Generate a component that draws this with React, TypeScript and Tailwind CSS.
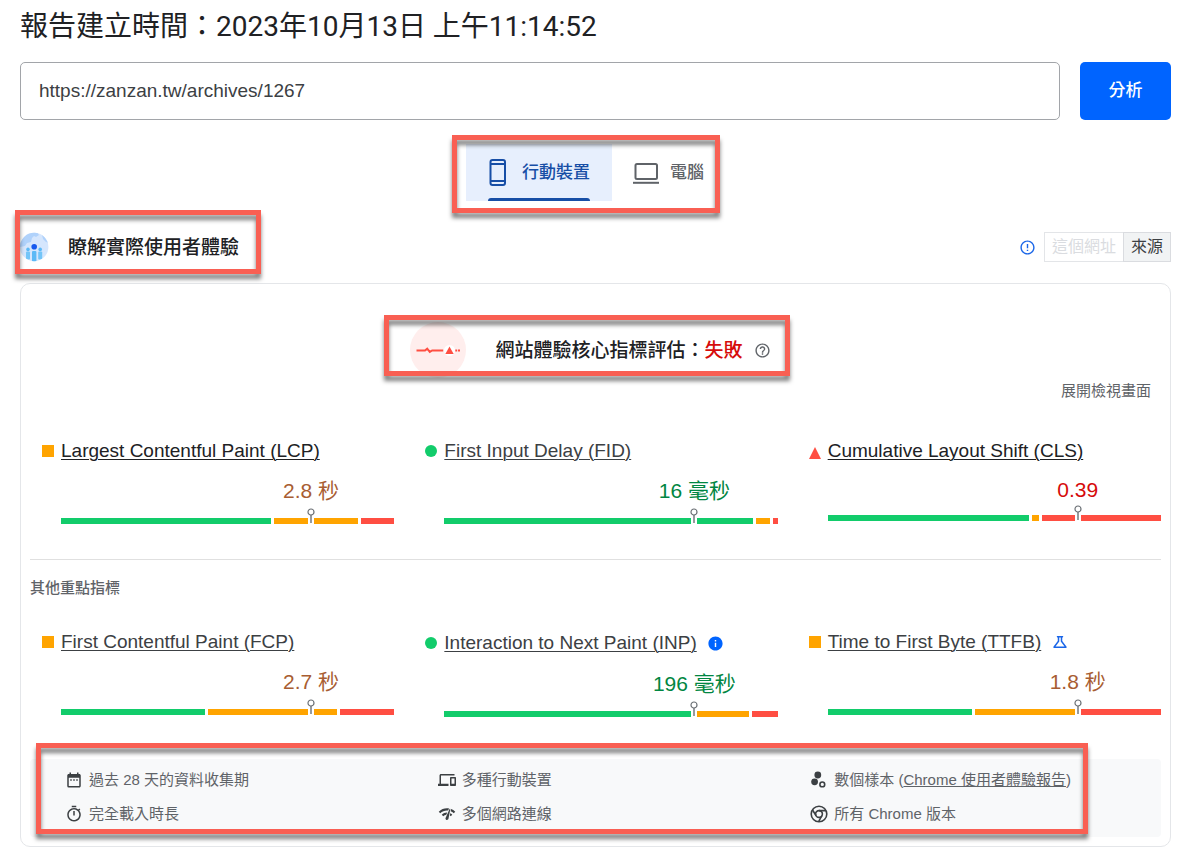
import { useState } from 'react';
import type { ReactNode } from 'react';
import clsx from 'clsx';
import {
  MdDateRange,
  MdErrorOutline,
  MdHelpOutline,
  MdInfo,
  MdNetworkCheck,
  MdOutlineDevices,
  MdOutlineScience,
  MdOutlineTimer,
} from 'react-icons/md';

type Rating = 'good' | 'average' | 'poor';

interface Metric {
  name: string;
  value: string;
  rating: Rating;
  shares: [number, number, number];
  strong?: boolean;
  badge?: 'info' | 'experimental';
}

const CORE_METRICS: Metric[] = [
  { name: 'Largest Contentful Paint (LCP)', value: '2.8 秒', rating: 'average', shares: [210, 85, 33], strong: true },
  { name: 'First Input Delay (FID)', value: '16 毫秒', rating: 'good', shares: [309, 14, 5] },
  { name: 'Cumulative Layout Shift (CLS)', value: '0.39', rating: 'poor', shares: [202, 7, 119], strong: true },
];

const OTHER_METRICS: Metric[] = [
  { name: 'First Contentful Paint (FCP)', value: '2.7 秒', rating: 'average', shares: [144, 130, 54] },
  { name: 'Interaction to Next Paint (INP)', value: '196 毫秒', rating: 'good', shares: [248, 54, 26], badge: 'info' },
  { name: 'Time to First Byte (TTFB)', value: '1.8 秒', rating: 'average', shares: [145, 101, 82], badge: 'experimental' },
];

const VALUE_COLORS: Record<Rating, string> = {
  good: 'text-[#018642]',
  average: 'text-[#a85d32]',
  poor: 'text-[#d60b0b]',
};

const BAR_COLORS = ['bg-[#12cc6b]', 'bg-[#ffa400]', 'bg-[#ff4e42]'];

function Highlight({ className }: { className: string }) {
  return (
    <div
      aria-hidden
      className={clsx(
        'pointer-events-none absolute z-10 border-5 border-[#f95f53] drop-shadow-[0_5px_2px_rgba(0,0,0,0.5)]',
        className,
      )}
    />
  );
}

function PhoneIcon() {
  return (
    <svg viewBox="0 0 18 27" className="h-[27px] w-[18px]" fill="none" stroke="currentColor" strokeWidth="2" aria-hidden>
      <rect x="2.5" y="1" width="14.5" height="25" rx="2" />
      <path d="M2.5 5h14.5M2.5 22h14.5" />
    </svg>
  );
}

function LaptopIcon() {
  return (
    <svg viewBox="0 0 26 22" className="h-[22px] w-[26px]" fill="none" stroke="currentColor" strokeWidth="2" aria-hidden>
      <rect x="2.5" y="2" width="21.5" height="15" rx="1.5" />
      <path d="M0 20.8h26" />
    </svg>
  );
}

function UsersGlobe() {
  return (
    <svg viewBox="0 0 30 30" className="size-[30px]" aria-hidden>
      <defs>
        <clipPath id="globe">
          <circle cx="14.2" cy="15" r="14.2" />
        </clipPath>
      </defs>
      <g clipPath="url(#globe)">
        <rect width="30" height="30" fill="#d5e6fd" />
        <path d="M0 0h17l2 3-3 2-2-1-2 2-1 4-4 1-2 3-5 1zM22 3l4 2 3 6-3-1-3-3z" fill="#b0d2fb" />
        <rect x="6" y="19.5" width="4" height="8" rx="1" fill="#73c5f8" />
        <rect x="12" y="19" width="4.4" height="11" rx="1" fill="#5cb9f6" />
        <rect x="18.2" y="19.5" width="4" height="8" rx="1" fill="#73c5f8" />
        <circle cx="8" cy="17.4" r="1.8" fill="#5cb9f6" />
        <circle cx="20.2" cy="17.4" r="1.8" fill="#5cb9f6" />
        <circle cx="14.2" cy="14.8" r="2.8" fill="#1659ee" />
      </g>
    </svg>
  );
}

function PulseIcon() {
  return (
    <svg viewBox="0 0 56 56" className="size-14" aria-hidden>
      <circle cx="28" cy="28" r="28" fill="#ffeeed" />
      <path d="M6.5 28.5h8.5l2.2-1.8 2.6 3.2 2.4-1.4h11" fill="none" stroke="#ff4e42" strokeWidth="2" />
      <circle cx="39.5" cy="28.5" r="5.5" fill="#fff" />
      <path d="M39.5 24.4l4.2 7.6h-8.4z" fill="#ff4e42" />
      <path d="M45.3 28.5h1.9M48 28.5h2" stroke="#ff4e42" strokeWidth="2" />
    </svg>
  );
}

function SamplesIcon() {
  return (
    <svg viewBox="0 0 18 18" className="size-[18px]" aria-hidden>
      <circle cx="7.8" cy="4" r="3.4" fill="currentColor" />
      <circle cx="4.6" cy="10.8" r="3.4" fill="currentColor" />
      <circle cx="12.3" cy="13.4" r="2.4" fill="none" stroke="currentColor" strokeWidth="1.6" />
    </svg>
  );
}

function ChromeIcon() {
  return (
    <svg viewBox="0 0 18 18" className="size-[18px]" fill="none" stroke="currentColor" strokeWidth="1.6" aria-hidden>
      <circle cx="9" cy="9" r="7.8" />
      <circle cx="9" cy="9" r="3.4" />
      <path d="M9 5.6h7M6.1 10.7L2.4 4.8M11.9 10.7L8.6 16.7" />
    </svg>
  );
}

function RatingMark({ rating }: { rating: Rating }) {
  if (rating === 'good') return <span className="size-3 rounded-full bg-[#12cc6b]" />;
  if (rating === 'average') return <span className="size-3 bg-[#ffa400]" />;
  return (
    <svg viewBox="0 0 12 12" className="mt-1 size-3" aria-hidden>
      <path d="M6 0l6 12H0z" fill="#ff4e42" />
    </svg>
  );
}

function Distribution({ shares }: { shares: Metric['shares'] }) {
  return (
    <div className="relative mt-3 flex h-1.5 gap-[3px]">
      {shares.map((share, i) => (
        <span key={i} className={BAR_COLORS[i]} style={{ flexGrow: share }} />
      ))}
      {/* 75th percentile pin */}
      <span className="absolute inset-y-0 left-3/4 w-1.5 -translate-x-1/2 bg-white" />
      <svg
        viewBox="0 0 8 15"
        className="absolute -top-2.5 left-3/4 h-[15px] w-2 -translate-x-1/2"
        fill="none"
        stroke="#6b7075"
        aria-hidden
      >
        <circle cx="4" cy="4" r="3" strokeWidth="1.2" />
        <path d="M4 7v8" strokeWidth="1.4" />
      </svg>
    </div>
  );
}

function MetricCell({ metric }: { metric: Metric }) {
  const { name, value, rating, shares, strong, badge } = metric;
  const unitless = !value.includes('秒');

  return (
    <div>
      <div className="flex min-h-6 items-center">
        <span className="flex w-[19px]">
          <RatingMark rating={rating} />
        </span>
        <a
          href="#metric"
          className={clsx(
            'text-[19px] leading-6 whitespace-nowrap underline decoration-1 underline-offset-2',
            strong ? 'text-[#202124]' : 'text-[#3c4043]',
          )}
        >
          {name}
        </a>
        {badge === 'info' && (
          <button type="button" aria-label="指標資訊" className="ml-2.5 flex h-[26px] items-center text-[#0064ff]">
            <MdInfo className="size-[17px]" />
          </button>
        )}
        {badge === 'experimental' && (
          <button type="button" aria-label="實驗性指標" className="ml-2.5 text-[#1a66e8]">
            <MdOutlineScience className="size-[18px]" />
          </button>
        )}
      </div>
      <div className="pl-[19px]">
        <p
          className={clsx(
            'mt-[13px] ml-auto w-1/2 text-center text-[21px]',
            unitless ? 'leading-[27px]' : 'leading-[30px]',
            VALUE_COLORS[rating],
          )}
        >
          {value}
        </p>
        <Distribution shares={shares} />
      </div>
    </div>
  );
}

function MetricRow({ metrics, className }: { metrics: Metric[]; className: string }) {
  return (
    <div className={clsx('grid grid-cols-3 gap-[31px] pl-3', className)}>
      {metrics.map((metric) => (
        <MetricCell key={metric.name} metric={metric} />
      ))}
    </div>
  );
}

function Fact({ icon, children }: { icon: ReactNode; children: ReactNode }) {
  return (
    <li className="flex items-center gap-1.5 whitespace-nowrap">
      <span className="text-[#3c4043]">{icon}</span>
      <span>{children}</span>
    </li>
  );
}

export default function App() {
  const [url, setUrl] = useState('https://zanzan.tw/archives/1267');

  return (
    <main className="bg-white pt-[7px] pr-[29px] pb-[7px] pl-5 font-['Liberation_Sans','Noto_Sans_CJK_TC',sans-serif] text-[#202124]">
      <h1 className="font-['Roboto','Noto_Sans_CJK_TC',sans-serif] text-[28px] leading-10">
        報告建立時間：2023年10月13日 上午11:14:52
      </h1>

      <form className="mt-[15px] flex h-[58px] gap-5" onSubmit={(e) => e.preventDefault()}>
        <input
          type="text"
          aria-label="網址"
          value={url}
          onChange={(e) => setUrl(e.target.value)}
          className="min-w-0 flex-1 rounded-[5px] border border-[#a2a5a9] px-[18px] text-[19px] text-[#3c4043]"
        />
        <button type="submit" className="w-[91px] rounded-[5px] bg-[#0064ff] text-[17px] font-medium text-white">
          分析
        </button>
      </form>

      <div className="mt-6 flex justify-center">
        <div role="tablist" className="relative flex h-[57px] text-[17px] font-medium">
          <button
            type="button"
            role="tab"
            aria-selected="true"
            className="relative flex items-center gap-4 bg-[#e7effd] px-[22px] text-[#174ea6]"
          >
            <PhoneIcon />
            行動裝置
            <span className="absolute inset-x-[22px] bottom-0 h-[3px] rounded-t-sm bg-[#174ea6]" />
          </button>
          <button
            type="button"
            role="tab"
            aria-selected="false"
            className="flex items-center gap-[11px] px-[21px] text-[#5f6368]"
          >
            <LaptopIcon />
            電腦
          </button>
          <Highlight className="-top-[9px] right-[5px] -bottom-3 -left-[14px]" />
        </div>
      </div>

      <div className="mt-[31px] flex h-[30px] items-center justify-between">
        <div className="relative flex items-center gap-[18px]">
          <UsersGlobe />
          <h2 className="pt-0.5 text-[19px] leading-7 font-medium">瞭解實際使用者體驗</h2>
          <Highlight className="-top-[22px] -right-[22px] -bottom-3 -left-[5px]" />
        </div>
        <div className="flex items-center">
          <button type="button" aria-label="說明" className="mr-2 text-[#1a66e8]">
            <MdErrorOutline className="size-[17px]" />
          </button>
          <div className="flex h-[30px] text-base">
            <button type="button" disabled className="border border-[#e3e5e8] px-[7px] text-[#dadce0]">
              這個網址
            </button>
            <button
              type="button"
              className="-ml-px border border-[#dadce0] bg-[#f1f3f4] px-[7px] text-[#3c4043]"
            >
              來源
            </button>
          </div>
        </div>
      </div>

      <section className="mt-[21px] rounded-[10px] border border-[#e4e6e9] px-[9px] pt-[38px] pb-[9px]">
        <div className="flex justify-center pr-[10px]">
          <div className="relative flex items-center">
            <PulseIcon />
            <h2 className="ml-[29px] pt-0.5 text-[19px] leading-7 font-medium">
              網站體驗核心指標評估：<span className="text-[#d60b0b]">失敗</span>
            </h2>
            <button type="button" aria-label="說明" className="ml-[11px] text-[#5f6368]">
              <MdHelpOutline className="size-[17px]" />
            </button>
            <Highlight className="-top-[7px] -right-[19px] bottom-0.5 -left-[26px]" />
          </div>
        </div>

        <div className="mt-[3px] flex justify-end pr-[10px]">
          <button type="button" className="text-[15px] leading-5 text-[#5f6368]">
            展開檢視畫面
          </button>
        </div>

        <MetricRow metrics={CORE_METRICS} className="mt-[38px]" />

        <hr className="mt-[35px] border-[#e0e0e0]" />

        <h3 className="mt-[18px] text-[15px] leading-5 font-medium text-[#5f6368]">其他重點指標</h3>

        <MetricRow metrics={OTHER_METRICS} className="mt-8" />

        <div className="relative mt-[42px] rounded-sm bg-[#f8f9fa] pt-[11px] pb-[13px] pl-[35px]">
          <ul className="grid grid-cols-[34%_34%_32%] gap-y-[14px] text-[15px] leading-5 text-[#5f6368]">
            <Fact icon={<MdDateRange className="size-[18px]" />}>過去 28 天的資料收集期</Fact>
            <Fact icon={<MdOutlineDevices className="size-[18px]" />}>多種行動裝置</Fact>
            <Fact icon={<SamplesIcon />}>
              數個樣本 (
              <a href="#crux" className="underline">
                Chrome 使用者體驗報告
              </a>
              )
            </Fact>
            <Fact icon={<MdOutlineTimer className="size-[18px]" />}>完全載入時長</Fact>
            <Fact icon={<MdNetworkCheck className="size-[18px]" />}>多個網路連線</Fact>
            <Fact icon={<ChromeIcon />}>所有 Chrome 版本</Fact>
          </ul>
          <Highlight className="-top-4 right-[73px] bottom-[3px] left-1.5" />
        </div>
      </section>
    </main>
  );
}
